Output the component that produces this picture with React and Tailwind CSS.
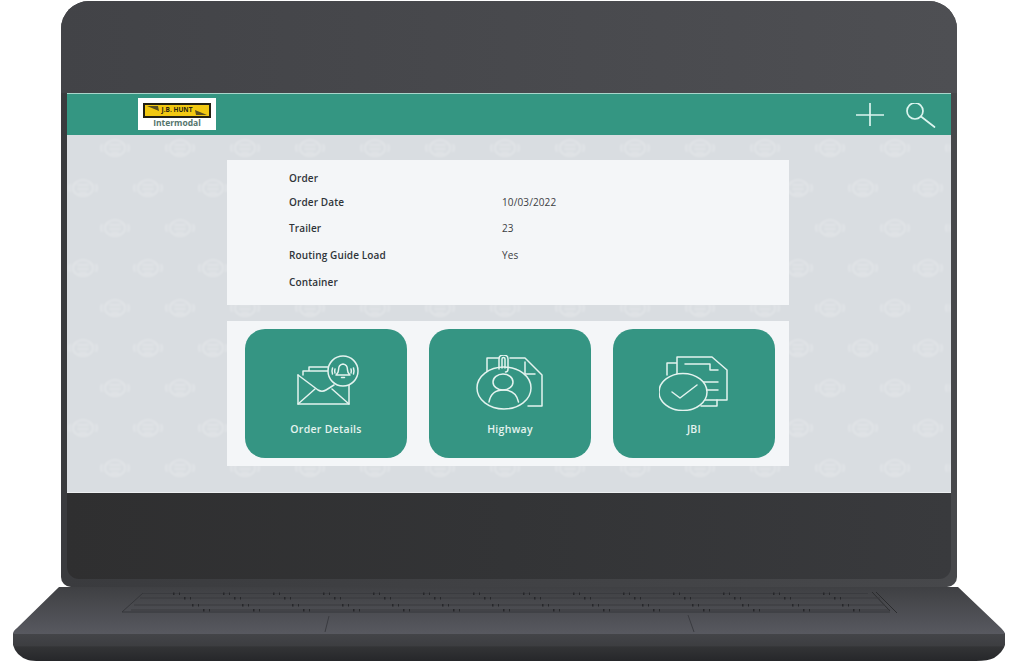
const font = { fontFamily: '"Open Sans", sans-serif' };

function Watermark() {
  return (
    <svg className="absolute inset-0 blur-[0.8px]" width="884" height="356">
      <defs>
        <g id="wm" fill="none" stroke="#ffffff" strokeOpacity="0.3" strokeWidth="1.5">
          <ellipse cx="0" cy="0" rx="10" ry="8" />
          <path d="M-6 -3h12M-6 1h12M-4 5h8M-13 -4q-2 4 0 8M13 -4q2 4 0 8" />
        </g>
        <pattern id="wmTile" width="65" height="80" patternUnits="userSpaceOnUse">
          <use href="#wm" x="48" y="13" />
          <use href="#wm" x="16" y="53" />
        </pattern>
      </defs>
      <rect width="884" height="356" fill="url(#wmTile)" />
    </svg>
  );
}

function OrderIcon() {
  return (
    <svg width="70" height="56" viewBox="291 355 70 56" fill="none" stroke="#e4f3ef" strokeWidth="1.5" strokeLinejoin="round" strokeLinecap="round">
      <path d="M298 375v29h51v-19" />
      <path d="M298 375l20 15q4 2.500 8 0l8 -5" />
      <path d="M298 404l17 -15M349 404l-17 -15" />
      <path d="M303 375v-4h33M309 371v-4h20" />
      <circle cx="343" cy="371" r="15" fill="#359583" />
      <path d="M336 375h14q-2.500 -2 -2.500 -5q0 -5.500 -4.500 -6q-4.500 .5 -4.500 6q0 3 -2.500 5zM341.500 377.500h3" />
      <path d="M332.500 368q-1 3 0 6M335 369q-.7 2 0 4M353.500 368q1 3 0 6M351 369q.7 2 0 4" />
    </svg>
  );
}

function HighwayIcon() {
  return (
    <svg width="70" height="56" viewBox="475 355 70 56" fill="none" stroke="#e4f3ef" strokeWidth="1.5" strokeLinejoin="round" strokeLinecap="round">
      <path d="M487 372v-14h12M510 358h15l17 17v31h-14" />
      <path d="M525 362v12h10" />
      <ellipse cx="504" cy="388" rx="27" ry="21" fill="#359583" />
      <path d="M499 369v-10q0 -4 4.500 -4q4.500 0 4.500 4v10q0 3 -2.500 3M502 368v-9q0 -1.500 1.500 -1.500q1.500 0 1.500 1.500v9" />
      <ellipse cx="503" cy="382" rx="10" ry="8" />
      <path d="M489 402q2 -12 14.500 -12q12.500 0 15 12" />
    </svg>
  );
}

function JbiIcon() {
  return (
    <svg width="70" height="56" viewBox="659 355 70 56" fill="none" stroke="#e4f3ef" strokeWidth="1.5" strokeLinejoin="round" strokeLinecap="round">
      <path d="M667 375v-12h10M677 374v-17h35l15 13v30h-24" />
      <path d="M685 364h25v6h8M703 382h15M706 390h12M701 406h16v-6" />
      <ellipse cx="683" cy="392" rx="24" ry="18.500" fill="#359583" />
      <path d="M672 392l8 6l17 -13" />
    </svg>
  );
}

function Logo() {
  return (
    <div className="ml-[71px] flex h-[32px] w-[78px] flex-col items-center bg-white pt-[5px]">
      <div className="relative flex h-[15px] w-[68px] shrink-0 items-center justify-center overflow-hidden border-2 border-[#221f12] bg-[#f2c811]">
        <svg className="absolute inset-0" width="64" height="11" viewBox="0 0 64 11">
          <path d="M2 1h11l1 5zM62 10H51l-1 -5z" fill="#5a5020" />
        </svg>
        <span className="relative text-[6.500px] leading-none font-bold whitespace-nowrap text-[#2a2510]" style={font}>J.B. HUNT</span>
      </div>
      <span className="text-[8.500px] leading-[10px] font-bold text-[#55756c]" style={font}>Intermodal</span>
    </div>
  );
}

function Card({ icon, label }) {
  return (
    <div className="flex h-[129px] w-[162px] shrink-0 flex-col items-center rounded-[20px] bg-[#359583] pt-[26px]">
      {icon}
      <span className="mt-[11px] text-[10.500px] leading-[14px] font-semibold tracking-[0.3px] text-[#e4f3ef]">{label}</span>
    </div>
  );
}

function Row({ label, value, rowClass }) {
  return (
    <div className={rowClass}>
      <span className="w-[213px] font-semibold text-[#2f3438]">{label}</span>
      <span className="text-[#3c4043]">{value}</span>
    </div>
  );
}

function Screen() {
  return (
    <div className="flex h-[400px] flex-col overflow-hidden border-t border-t-[#a9d6cb] border-b border-b-[#eceef0]" style={font}>
      <div className="flex h-[41px] shrink-0 items-start justify-between bg-[#349682] pt-[4px]">
        <Logo />
        <div className="mr-[15px] flex items-start gap-[22px] pt-[5px]">
          <svg width="28" height="24" viewBox="0 0 28 24" fill="none" stroke="#dcf5ef" strokeWidth="1.7">
            <path d="M0 12H28M14 0V23" />
          </svg>
          <svg width="30" height="26" viewBox="0 0 30 26" fill="none" stroke="#dcf5ef" strokeWidth="1.7" strokeLinecap="round">
            <circle cx="9" cy="8" r="8" />
            <path d="M15 13.500L28.500 24" />
          </svg>
        </div>
      </div>
      <div className="relative flex-1 bg-[#d9dde1] pt-[25px] pl-[160px]">
        <Watermark />
        <div className="relative flex h-[145px] w-[562px] flex-col bg-[#f4f6f8] pt-[6px] pl-[62px] text-[10px] tracking-[0.12px]">
          <Row label="Order" rowClass="flex h-[24px] items-center" />
          <Row label="Order Date" value="10/03/2022" rowClass="flex h-[24px] items-center" />
          <Row label="Trailer" value="23" rowClass="mt-[1px] flex h-[27px] items-center" />
          <Row label="Routing Guide Load" value="Yes" rowClass="flex h-[27px] items-center" />
          <Row label="Container" rowClass="flex h-[27px] items-center" />
        </div>
        <div className="relative mt-[16px] flex h-[145px] w-[562px] gap-[22px] bg-[#f4f6f8] pt-[8px] pl-[18px]">
          <Card icon={<OrderIcon />} label="Order Details" />
          <Card icon={<HighwayIcon />} label="Highway" />
          <Card icon={<JbiIcon />} label="JBI" />
        </div>
      </div>
    </div>
  );
}

function Base() {
  // keyboard rows, little dark key gaps along each one
  const rows = [
    { y: 593.500, x1: 143, x2: 868 },
    { y: 598, x1: 140, x2: 880 },
    { y: 605, x1: 134, x2: 885 },
    { y: 610, x1: 131, x2: 890 },
  ];
  return (
    <svg className="block" width="1016" height="77" viewBox="0 587 1016 77">
      <defs>
        <linearGradient id="deck" x1="0" y1="0" x2="0" y2="1">
          <stop offset="0" stopColor="#3f4043" />
          <stop offset="1" stopColor="#585960" />
        </linearGradient>
        <linearGradient id="front" x1="0" y1="0" x2="0" y2="1">
          <stop offset="0" stopColor="#444549" />
          <stop offset="0.45" stopColor="#3d3e41" />
          <stop offset="0.5" stopColor="#333436" />
          <stop offset="1" stopColor="#26272a" />
        </linearGradient>
      </defs>
      <path d="M13 633L13 645Q16 656 28 660Q32 661 40 661H976Q988 661 994 658Q1003 652 1005 645V633Z" fill="url(#front)" />
      <path d="M59 587H958L1001 628Q1005 632 1005 634H13Q13 631 17 628Z" fill="url(#deck)" />
      <path d="M143 593L122 612H890" fill="none" stroke="#35363a" strokeWidth="1" />
      <path d="M876 592L897 613M872 592L890 611" fill="none" stroke="#2b2c2e" strokeWidth="1" />
      {rows.map((r, i) => (
        <g key={i}>
          <path d={`M${r.x1} ${r.y}H${r.x2}`} stroke="#3a3b3f" strokeWidth="1" />
          {Array.from({ length: 14 }).map((_, k) => (
            <path
              key={k}
              d={`M${r.x1 + 30 + i * 14 + k * 50} ${r.y - 1}h1.500v2.500h-1.500zM${r.x1 + 36 + i * 14 + k * 50} ${r.y - 1}h1v2.500h-1z`}
              fill="#26272a"
            />
          ))}
        </g>
      ))}
      <path d="M329 616L325 632M688 615L694 632" stroke="#3a3b40" strokeWidth="1" fill="none" />
    </svg>
  );
}

export default function App() {
  return (
    <div className="flex h-[664px] w-[1016px] flex-col overflow-hidden bg-white pt-px">
      <div className="ml-[61px] flex h-[586px] w-[896px] flex-col overflow-hidden rounded-t-[28px] rounded-b-[10px] bg-gradient-to-r from-[#3a3b3e] to-[#47484b]">
        <div className="h-[92px] shrink-0 bg-gradient-to-r from-[#424347] to-[#4e4f53]" />
        <div className="shrink-0 px-[6px]">
          <Screen />
        </div>
        <div className="flex flex-1 flex-col px-[6px]">
          <div className="flex-1 rounded-b-[12px] bg-gradient-to-r from-[#2f2f30] via-[#333436] to-[#393a3d]" />
          <div className="h-[8px] shrink-0" />
        </div>
      </div>
      <Base />
    </div>
  );
}
